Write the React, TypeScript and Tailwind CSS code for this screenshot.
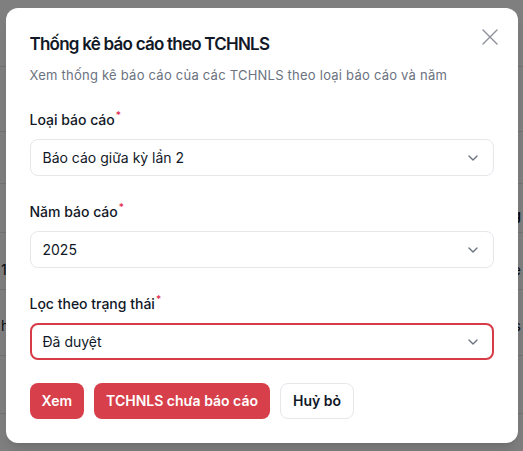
import React from 'react';
import { ChevronDown } from 'lucide-react';

const rows = [
  { h: 'h-[67px]', pt: 'pt-[23px]', left: '', right: '', bold: false },
  { h: 'h-[65px]', pt: 'pt-[22px]', left: '', right: '', bold: false },
  { h: 'h-[52px]', pt: 'pt-[16px]', left: '', right: '', bold: false },
  { h: 'h-[49px]', pt: 'pt-[21px]', left: '', right: 'Tổng', bold: true },
  { h: 'h-[57px]', pt: 'pt-[27px]', left: '1', right: 'Online', bold: false },
  { h: 'h-[66px]', pt: 'pt-[26px]', left: 'hồ sơ', right: 'files', bold: false },
  { h: 'h-[58px]', pt: 'pt-[19px]', left: '', right: '', bold: false },
];

const Field: React.FC<{ label: string; value: string; active?: boolean }> = ({ label, value, active }) => (
  <div>
    <label className="block text-sm leading-5 font-medium text-[#111827]">
      {label}
      <span className="ml-px align-top text-[10px] leading-none text-[#e11d48]">*</span>
    </label>
    <div
      className={`mt-[9px] flex h-[37px] items-center justify-between rounded-lg bg-white text-sm text-[#111827] ${
        active ? 'border-2 border-[#d63b47] px-[11px]' : 'border border-[#e5e7eb] px-3'
      }`}
    >
      <span>{value}</span>
      <ChevronDown size={16} className="text-[#6b7280]" />
    </div>
  </div>
);

export default function App() {
  return (
    <div className="relative h-[451px] w-[523px] overflow-hidden bg-white font-['Inter',sans-serif]">
      {/* page behind the dialog */}
      <div className="flex flex-col">
        {rows.map((r, i) => (
          <div
            key={i}
            className={`${r.h} ${r.pt} flex items-start justify-between border-b border-[#e5e7eb] text-sm leading-5 text-[#111827]`}
          >
            <span className="pl-px">{r.left}</span>
            <span className={`pr-[2px] whitespace-nowrap ${r.bold ? 'font-semibold' : ''}`}>{r.right}</span>
          </div>
        ))}
      </div>

      <div className="absolute inset-0 flex items-center justify-center bg-black/50">
        <div className="relative w-full max-w-lg rounded-xl bg-white px-6 pt-[22px] pb-6 shadow-lg">
          <button className="absolute top-[21px] right-[20px] text-[#8b909a]">
            <svg width="16" height="16" viewBox="0 0 16 16" fill="none" stroke="currentColor" strokeWidth="1.4" strokeLinecap="round">
              <path d="M1 1l14 14M15 1L1 15" />
            </svg>
          </button>

          <h2 className="text-[17px] leading-7 font-semibold tracking-[-0.045em] text-[#111827]">
            Thống kê báo cáo theo TCHNLS
          </h2>
          <p className="mt-[7px] text-[13px] leading-5 tracking-[0.018em] text-[#6b7280]">
            Xem thống kê báo cáo của các TCHNLS theo loại báo cáo và năm
          </p>

          <div className="mt-[25px] flex flex-col gap-[26px]">
            <Field label="Loại báo cáo" value="Báo cáo giữa kỳ lần 2" />
            <Field label="Năm báo cáo" value="2025" />
            <Field label="Lọc theo trạng thái" value="Đã duyệt" active />
          </div>

          <div className="mt-[23px] flex gap-[10px]">
            <button className="h-9 rounded-lg bg-[#d7404b] px-3 text-sm font-semibold text-white">Xem</button>
            <button className="h-9 rounded-lg bg-[#d7404b] px-3 text-sm font-semibold text-white">TCHNLS chưa báo cáo</button>
            <button className="h-9 rounded-lg border border-[#e5e7eb] bg-white px-3 text-sm font-semibold text-[#111827]">
              Huỷ bỏ
            </button>
          </div>
        </div>
      </div>
    </div>
  );
}
